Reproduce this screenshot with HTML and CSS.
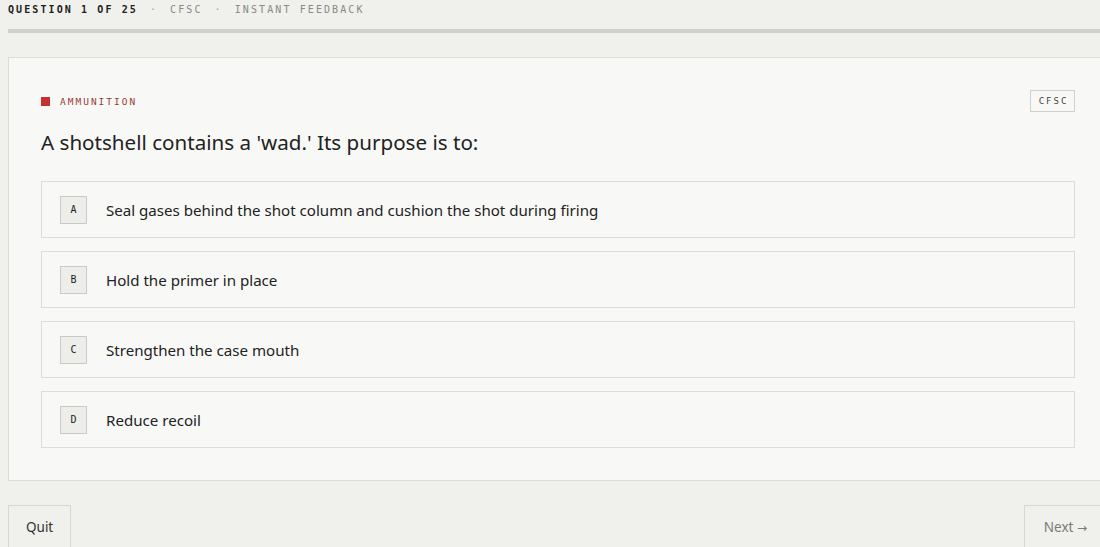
FILE: index.html
```html
<!DOCTYPE html>
<html lang="en">
<head>
<meta charset="utf-8">
<title>Quiz</title>
<link rel="stylesheet" href="styles.css">
</head>
<body>
<div class="page">
  <header class="topline">
    <span class="count">QUESTION 1 OF 25</span>
    <span class="sep">·</span>
    <span class="meta">CFSC</span>
    <span class="sep">·</span>
    <span class="meta">INSTANT FEEDBACK</span>
  </header>
  <div class="progress"><div class="progress-fill" style="width:4%"></div></div>

  <main class="card">
    <div class="card-head">
      <div class="category"><span class="cat-square"></span><span class="cat-label">AMMUNITION</span></div>
      <span class="badge">CFSC</span>
    </div>
    <h1 class="question">A shotshell contains a 'wad.' Its purpose is to:</h1>
    <div class="options">
      <button class="option"><span class="letter">A</span><span class="opt-text">Seal gases behind the shot column and cushion the shot during firing</span></button>
      <button class="option"><span class="letter">B</span><span class="opt-text">Hold the primer in place</span></button>
      <button class="option"><span class="letter">C</span><span class="opt-text">Strengthen the case mouth</span></button>
      <button class="option"><span class="letter">D</span><span class="opt-text">Reduce recoil</span></button>
    </div>
  </main>

  <nav class="actions">
    <button class="btn quit">Quit</button>
    <button class="btn next">Next <span class="arrow">→</span></button>
  </nav>
</div>
</body>
</html>
```
FILE: styles.css
```css
html, body {
  margin: 0;
  padding: 0;
  overflow: hidden;
  background: #f0f0ec;
}
body {
  font-family: "Noto Sans", "Liberation Sans", sans-serif;
  color: #222;
}
.page {
  width: 1100px;
  padding: 0 8px;
}
.topline {
  display: flex;
  align-items: center;
  gap: 12px;
  height: 18px;
  font-family: "DejaVu Sans Mono", "Liberation Mono", monospace;
  font-size: 10px;
  letter-spacing: 2.1px;
  color: #8a8a86;
}
.count {
  color: #1e1e1e;
  font-weight: bold;
}
.sep {
  color: #a8a8a4;
}
.progress {
  margin-top: 11px;
  height: 4px;
  background: #cfd0cb;
}
.progress-fill {
  height: 100%;
  background: #cfd0cb;
}
.card {
  margin-top: 24px;
  background: #f8f9f7;
  border: 1px solid #dcdcd8;
  padding: 32px;
}
.card-head {
  display: flex;
  justify-content: space-between;
  align-items: center;
  height: 22px;
}
.category {
  display: flex;
  align-items: center;
  gap: 10px;
}
.cat-square {
  width: 9px;
  height: 9px;
  background: #c53030;
}
.cat-label {
  font-family: "DejaVu Sans Mono", "Liberation Mono", monospace;
  font-size: 9.5px;
  letter-spacing: 2px;
  color: #983838;
}
.badge {
  box-sizing: border-box;
  height: 22px;
  width: 45px;
  display: flex;
  align-items: center;
  justify-content: center;
  border: 1px solid #cfcfcb;
  font-family: "DejaVu Sans Mono", "Liberation Mono", monospace;
  font-size: 9px;
  letter-spacing: 2px;
  padding-left: 2px;
  color: #444;
}
.question {
  margin: 15px 0 24px;
  font-size: 20.6px;
  line-height: 30px;
  font-weight: normal;
  color: #222;
}
.options {
  display: flex;
  flex-direction: column;
  gap: 13px;
}
.option {
  box-sizing: border-box;
  height: 57px;
  display: flex;
  align-items: center;
  gap: 19px;
  padding: 0 18px;
  background: #f8f9f7;
  border: 1px solid #dcdcd8;
  font-family: inherit;
  text-align: left;
  cursor: pointer;
}
.letter {
  box-sizing: border-box;
  width: 27px;
  height: 28px;
  display: flex;
  align-items: center;
  justify-content: center;
  background: #ededea;
  border: 1px solid #c9c9c5;
  font-family: "DejaVu Sans Mono", "Liberation Mono", monospace;
  font-size: 10px;
  color: #1e1e1e;
}
.opt-text {
  font-size: 15.1px;
  color: #222;
}
.actions {
  margin-top: 24px;
  display: flex;
  justify-content: space-between;
}
.btn {
  height: 44px;
  background: #f0f0ec;
  border: 1px solid #d6d6d2;
  font-family: "Noto Sans", "Liberation Sans", sans-serif;
  font-size: 13.5px;
  padding: 0 17px;
  white-space: nowrap;
}
.quit {
  color: #333;
}
.next {
  padding: 0 20px 0 19px;
  color: #7a7a76;
}
.arrow {
  font-family: "DejaVu Sans", sans-serif;
  font-size: 12px;
}
```
